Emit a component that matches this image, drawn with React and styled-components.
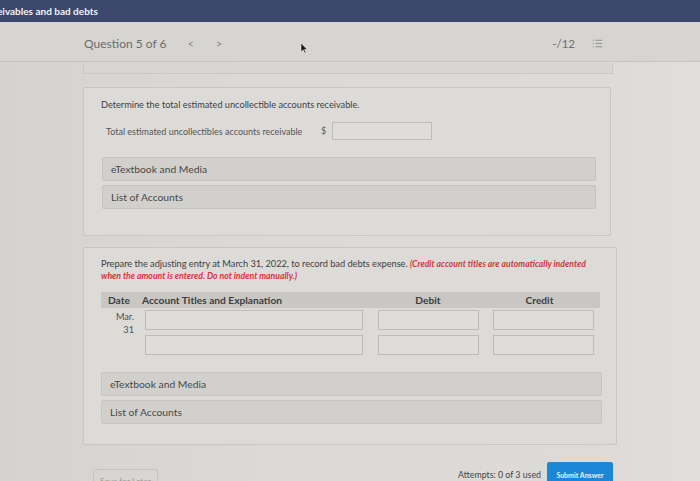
import React from "react";
import styled, { createGlobalStyle } from "styled-components";

const GlobalStyle = createGlobalStyle`
  html, body {
    margin: 0;
    padding: 0;
    background: #d9d8d5;
    font-family: "Lato", "Liberation Sans", sans-serif;
    overflow: hidden;
  }
`;

const Page = styled.div`
  width: 700px;
  height: 481px;
  position: relative;
  overflow: hidden;
  background: linear-gradient(90deg, #d4d3d0 0%, #dbdad7 40%, #dcdbd8 85%, #e0dfdc 100%);
`;

const TopBar = styled.div`
  height: 22px;
  background: #3b486b;
  display: flex;
  align-items: center;
  color: #f2f3f7;
  font-size: 10px;
  font-weight: 700;
  margin-left: -3px;
`;

const Header = styled.div`
  height: 39px;
  border-bottom: 1px solid #c4c3c0;
  background: #d6d5d2;
`;

const Column = styled.div`
  width: 530px;
  margin-left: 83px;
`;

const HeaderRow = styled.div`
  height: 39px;
  display: flex;
  align-items: center;
  padding: 4px 10px 0 1px;
  box-sizing: border-box;
  color: #6d6d6d;
  font-size: 12px;
`;

const Nav = styled.span`
  color: #8a8a8a;
  font-size: 11px;
  margin-left: ${(p) => p.$gap}px;
`;

const Score = styled.span`
  margin-left: auto;
  font-size: 11.5px;
  color: #6f6f6f;
`;

const ListIcon = styled.svg`
  margin-left: 17px;
`;

const Strip = styled.div`
  height: 10px;
  margin-top: 1px;
  border: 1px solid #c9c8c5;
  border-top: none;
  background: #d7d6d3;
`;

const Card = styled.div`
  margin-top: ${(p) => p.$top}px;
  width: ${(p) => p.$w || 528}px;
  box-sizing: border-box;
  background: #dcdbd8;
  border: 1px solid #c8c7c4;
  border-radius: 2px;
  padding: ${(p) => p.$pad};
`;

const Prompt = styled.p`
  margin: 0;
  font-size: ${(p) => p.$size}px;
  line-height: 12px;
  color: #3f3f3f;
  white-space: nowrap;
  letter-spacing: ${(p) => p.$ls || 0}px;
`;

const Note = styled.span`
  color: #d8343c;
  font-style: italic;
  font-weight: 700;
  font-size: 8.7px;
  letter-spacing: 0;
`;

const AmountRow = styled.div`
  display: flex;
  align-items: center;
  margin: 11px 0 0 5px;
  font-size: 9px;
  color: #555;
`;

const Dollar = styled.span`
  margin-left: 19px;
  margin-right: 6px;
  font-size: 8.5px;
`;

const Input = styled.div`
  width: ${(p) => p.$w}px;
  height: ${(p) => p.$h || 18}px;
  box-sizing: border-box;
  border: 1px solid #bebdba;
  background: #dedddb;
`;

const Bars = styled.div`
  display: flex;
  flex-direction: column;
  gap: 4px;
  margin: ${(p) => p.$m};
`;

const Bar = styled.div`
  height: 24px;
  box-sizing: border-box;
  background: #d1d0cd;
  border: 1px solid #c5c4c1;
  border-radius: 2px;
  display: flex;
  align-items: center;
  padding-left: 8px;
  font-size: 10.3px;
  color: #484848;
`;

const Table = styled.div`
  margin-top: 10px;
  margin-right: 2px;
`;

const THead = styled.div`
  height: 16px;
  background: #c8c7c4;
  display: grid;
  grid-template-columns: 41px 231px 110px 1fr;
  align-items: center;
  font-size: 10.2px;
  font-weight: 700;
  color: #3d3d3d;
`;

const Th = styled.span`
  text-align: ${(p) => p.$align || "left"};
  padding-left: ${(p) => p.$pl || 0}px;
  padding-right: ${(p) => p.$pr || 0}px;
`;

const Row = styled.div`
  display: grid;
  grid-template-columns: 44px 233px 115px 1fr;
  align-items: start;
  height: 20px;
  margin-top: ${(p) => p.$top}px;
`;

const DateCell = styled.div`
  font-size: 9.2px;
  line-height: 13px;
  color: #505050;
  text-align: right;
  padding-right: 11px;
`;

const Footer = styled.div`
  display: flex;
  align-items: flex-start;
  margin-top: 17px;
  height: 26px;
`;

const SaveButton = styled.div`
  margin: 7px 0 0 10px;
  height: 22px;
  padding: 0 6px;
  border: 1px solid #c5c4c1;
  border-radius: 2px;
  font-size: 8.4px;
  color: #9a9a98;
  display: flex;
  align-items: center;
`;

const Attempts = styled.span`
  margin-left: auto;
  line-height: 26px;
  font-size: 8.8px;
  color: #444;
`;

const Submit = styled.div`
  margin-left: 6px;
  height: 26px;
  width: 66px;
  background: #1b87d6;
  border-radius: 2px;
  color: #e8f2fb;
  font-size: 7px;
  font-weight: 700;
  display: flex;
  align-items: center;
  justify-content: center;
`;

const Cursor = styled.svg`
  position: absolute;
  left: 300px;
  top: 42px;
`;

export default function App() {
  return (
    <Page>
      <GlobalStyle />
      <TopBar>eivables and bad debts</TopBar>
      <Header>
        <Column>
          <HeaderRow>
            Question 5 of 6
            <Nav $gap={21}>&lt;</Nav>
            <Nav $gap={22}>&gt;</Nav>
            <Score>-/12</Score>
            <ListIcon width="11" height="11" viewBox="0 0 12 12" fill="none" stroke="#8a8a8a" strokeWidth="1">
              <path d="M1 2.5h1M1 6h1M1 9.5h1M4 2.5h7M4 6h7M4 9.5h7" />
            </ListIcon>
          </HeaderRow>
        </Column>
      </Header>
      <Column>
        <Strip />
        <Card $top={13} $pad="11px 14px 26px 17px">
          <Prompt $size={9.2}>Determine the total estimated uncollectible accounts receivable.</Prompt>
          <AmountRow>
            Total estimated uncollectibles accounts receivable
            <Dollar>$</Dollar>
            <Input $w={100} />
          </AmountRow>
          <Bars $m="17px 0 0 1px">
            <Bar>eTextbook and Media</Bar>
            <Bar>List of Accounts</Bar>
          </Bars>
        </Card>
        <Card $top={11} $w={534} $pad="10px 14px 20px 17px">
          <Prompt $size={9.3} $ls={-0.05}>
            Prepare the adjusting entry at March 31, 2022, to record bad debts expense.{" "}
            <Note>
              (Credit account titles are automatically indented
              <br />
              when the amount is entered. Do not indent manually.)
            </Note>
          </Prompt>
          <Table>
            <THead>
              <Th $pl={7}>Date</Th>
              <Th>Account Titles and Explanation</Th>
              <Th $align="center">Debit</Th>
              <Th $align="center" $pr={4}>Credit</Th>
            </THead>
            <Row $top={2}>
              <DateCell>
                Mar.
                <br />
                31
              </DateCell>
              <Input $w={218} $h={20} />
              <Input $w={101} $h={20} />
              <Input $w={101} $h={20} />
            </Row>
            <Row $top={5}>
              <span />
              <Input $w={218} $h={20} />
              <Input $w={101} $h={20} />
              <Input $w={101} $h={20} />
            </Row>
          </Table>
          <Bars $m="17px 0 0 0">
            <Bar>eTextbook and Media</Bar>
            <Bar>List of Accounts</Bar>
          </Bars>
        </Card>
        <Footer>
          <SaveButton>Save for Later</SaveButton>
          <Attempts>Attempts: 0 of 3 used</Attempts>
          <Submit>Submit Answer</Submit>
        </Footer>
      </Column>
      <Cursor width="8" height="12" viewBox="0 0 8 12">
        <path d="M1 1 L1 10 L3.2 8 L4.8 11.3 L6 10.7 L4.5 7.5 L7.2 7.5 Z" fill="#1a1a1a" stroke="#f0f0f0" strokeWidth="0.6" />
      </Cursor>
    </Page>
  );
}
